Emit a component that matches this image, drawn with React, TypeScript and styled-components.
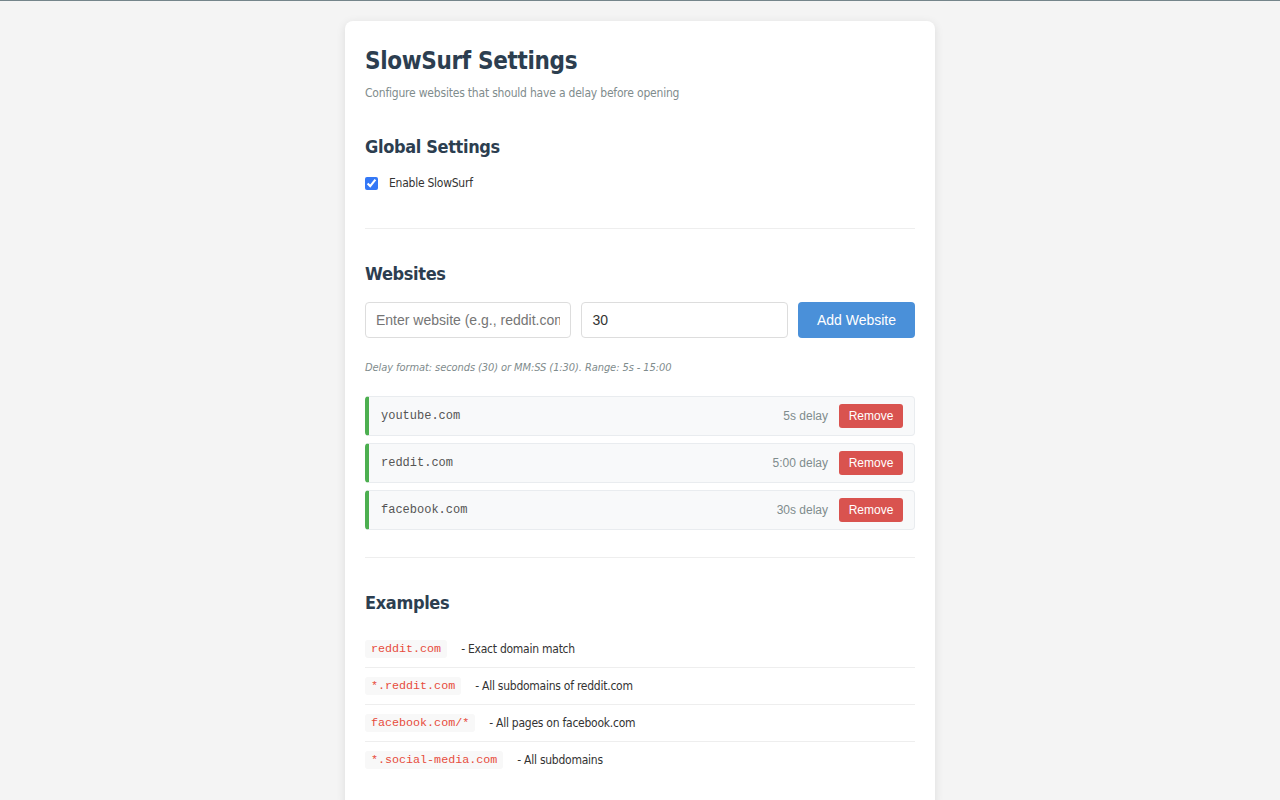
import React from "react";
import styled, { createGlobalStyle } from "styled-components";

const UI = `"DejaVu Sans Condensed", "DejaVu Sans", sans-serif`;
const ARIAL = `"Liberation Sans", Arial, sans-serif`;
const MONO = `"Liberation Mono", "Courier New", monospace`;

const GlobalStyle = createGlobalStyle`
  html, body { margin: 0; padding: 0; }
  body {
    background: #f4f4f4;
    border-top: 1px solid #75858b;
    font-family: ${UI};
    font-stretch: condensed;
    color: #333;
  }
`;

const Page = styled.div`
  padding: 20px 0 40px;
`;

const Card = styled.div`
  width: 550px;
  margin: 0 auto;
  background: #fff;
  border-radius: 8px;
  box-shadow: 0 2px 10px rgba(0, 0, 0, 0.1);
  padding: 20px 20px 30px;
`;

const Title = styled.h1`
  margin: 4px 0 0;
  font-size: 24px;
  line-height: 32px;
  font-weight: bold;
  letter-spacing: -0.35px;
  color: #2c3e50;
`;

const Subtitle = styled.p`
  margin: 8px 0 1px;
  font-size: 12px;
  line-height: 16px;
  letter-spacing: -0.2px;
  color: #7f8c8d;
`;

const Section = styled.section<{ $divider?: boolean; $bottom?: number }>`
  padding: 33px 0 ${(p) => (p.$bottom ?? 0)}px;
  border-bottom: ${(p) => (p.$divider ? "1px solid #eee" : "none")};
`;

const H2 = styled.h2`
  margin: 0;
  font-size: 18px;
  line-height: 24px;
  font-weight: bold;
  letter-spacing: -0.35px;
  color: #2c3e50;
`;

const CheckRow = styled.label`
  display: flex;
  align-items: center;
  gap: 11px;
  margin-top: 17px;
  font-size: 12px;
  letter-spacing: -0.25px;
  color: #333;
`;

const Check = styled.input`
  width: 13px;
  height: 13px;
  margin: 0;
  accent-color: #3478f6;
`;

const AddRow = styled.div`
  display: flex;
  gap: 10px;
  margin-top: 16px;
`;

const Input = styled.input`
  flex: 1;
  min-width: 0;
  height: 36px;
  box-sizing: border-box;
  padding: 0 10px;
  border: 1px solid #ddd;
  border-radius: 4px;
  font-family: ${ARIAL};
  font-size: 14px;
  color: #333;
  &::placeholder { color: #757575; }
`;

const AddButton = styled.button`
  height: 36px;
  padding: 0 19px;
  border: none;
  border-radius: 4px;
  background: #4a90d9;
  color: #fff;
  font-family: ${ARIAL};
  font-size: 14px;
`;

const Hint = styled.p`
  margin: 23px 0 0;
  font-size: 11px;
  font-style: italic;
  letter-spacing: -0.08px;
  color: #7f8c8d;
`;

const List = styled.div`
  display: flex;
  flex-direction: column;
  gap: 7px;
  margin-top: 22px;
`;

const SiteRow = styled.div`
  display: flex;
  align-items: center;
  height: 40px;
  box-sizing: border-box;
  padding: 0 11px 0 12px;
  background: #f8f9fa;
  border: 1px solid #e9ecef;
  border-left: 4px solid #4caf50;
  border-radius: 4px;
`;

const Domain = styled.span`
  flex: 1;
  font-family: ${MONO};
  font-size: 12px;
  color: #555;
`;

const Delay = styled.span`
  font-family: ${ARIAL};
  font-size: 12px;
  color: #7f8c8d;
  margin-right: 11px;
`;

const RemoveButton = styled.button`
  height: 24px;
  width: 64px;
  padding: 0;
  border: none;
  border-radius: 3px;
  background: #d9534f;
  color: #fff;
  font-family: ${ARIAL};
  font-size: 12px;
`;

const Examples = styled.div`
  margin-top: 16px;
`;

const ExampleRow = styled.div`
  display: flex;
  align-items: center;
  height: 36px;
  border-bottom: 1px solid #eee;
  font-size: 12px;
  letter-spacing: -0.25px;
  color: #333;
  &:last-child { border-bottom: none; }
`;

const Code = styled.code`
  font-family: ${MONO};
  font-size: 11.7px;
  letter-spacing: 0;
  color: #e74c3c;
  background: #f8f8f8;
  padding: 2px 6px;
  border-radius: 3px;
  margin-right: 14px;
`;

const sites = [
  { domain: "youtube.com", delay: "5s delay" },
  { domain: "reddit.com", delay: "5:00 delay" },
  { domain: "facebook.com", delay: "30s delay" },
];

const examples = [
  { code: "reddit.com", text: "- Exact domain match" },
  { code: "*.reddit.com", text: "- All subdomains of reddit.com" },
  { code: "facebook.com/*", text: "- All pages on facebook.com" },
  { code: "*.social-media.com", text: "- All subdomains" },
];

export default function App() {
  return (
    <Page>
      <GlobalStyle />
      <Card>
        <Title>SlowSurf Settings</Title>
        <Subtitle>Configure websites that should have a delay before opening</Subtitle>

        <Section $divider $bottom={38}>
          <H2>Global Settings</H2>
          <CheckRow>
            <Check type="checkbox" defaultChecked />
            Enable SlowSurf
          </CheckRow>
        </Section>

        <Section $divider $bottom={27}>
          <H2>Websites</H2>
          <AddRow>
            <Input placeholder="Enter website (e.g., reddit.com)" />
            <Input defaultValue="30" />
            <AddButton>Add Website</AddButton>
          </AddRow>
          <Hint>Delay format: seconds (30) or MM:SS (1:30). Range: 5s - 15:00</Hint>
          <List>
            {sites.map((s) => (
              <SiteRow key={s.domain}>
                <Domain>{s.domain}</Domain>
                <Delay>{s.delay}</Delay>
                <RemoveButton>Remove</RemoveButton>
              </SiteRow>
            ))}
          </List>
        </Section>

        <Section>
          <H2>Examples</H2>
          <Examples>
            {examples.map((e) => (
              <ExampleRow key={e.code}>
                <Code>{e.code}</Code>
                {e.text}
              </ExampleRow>
            ))}
          </Examples>
        </Section>
      </Card>
    </Page>
  );
}
